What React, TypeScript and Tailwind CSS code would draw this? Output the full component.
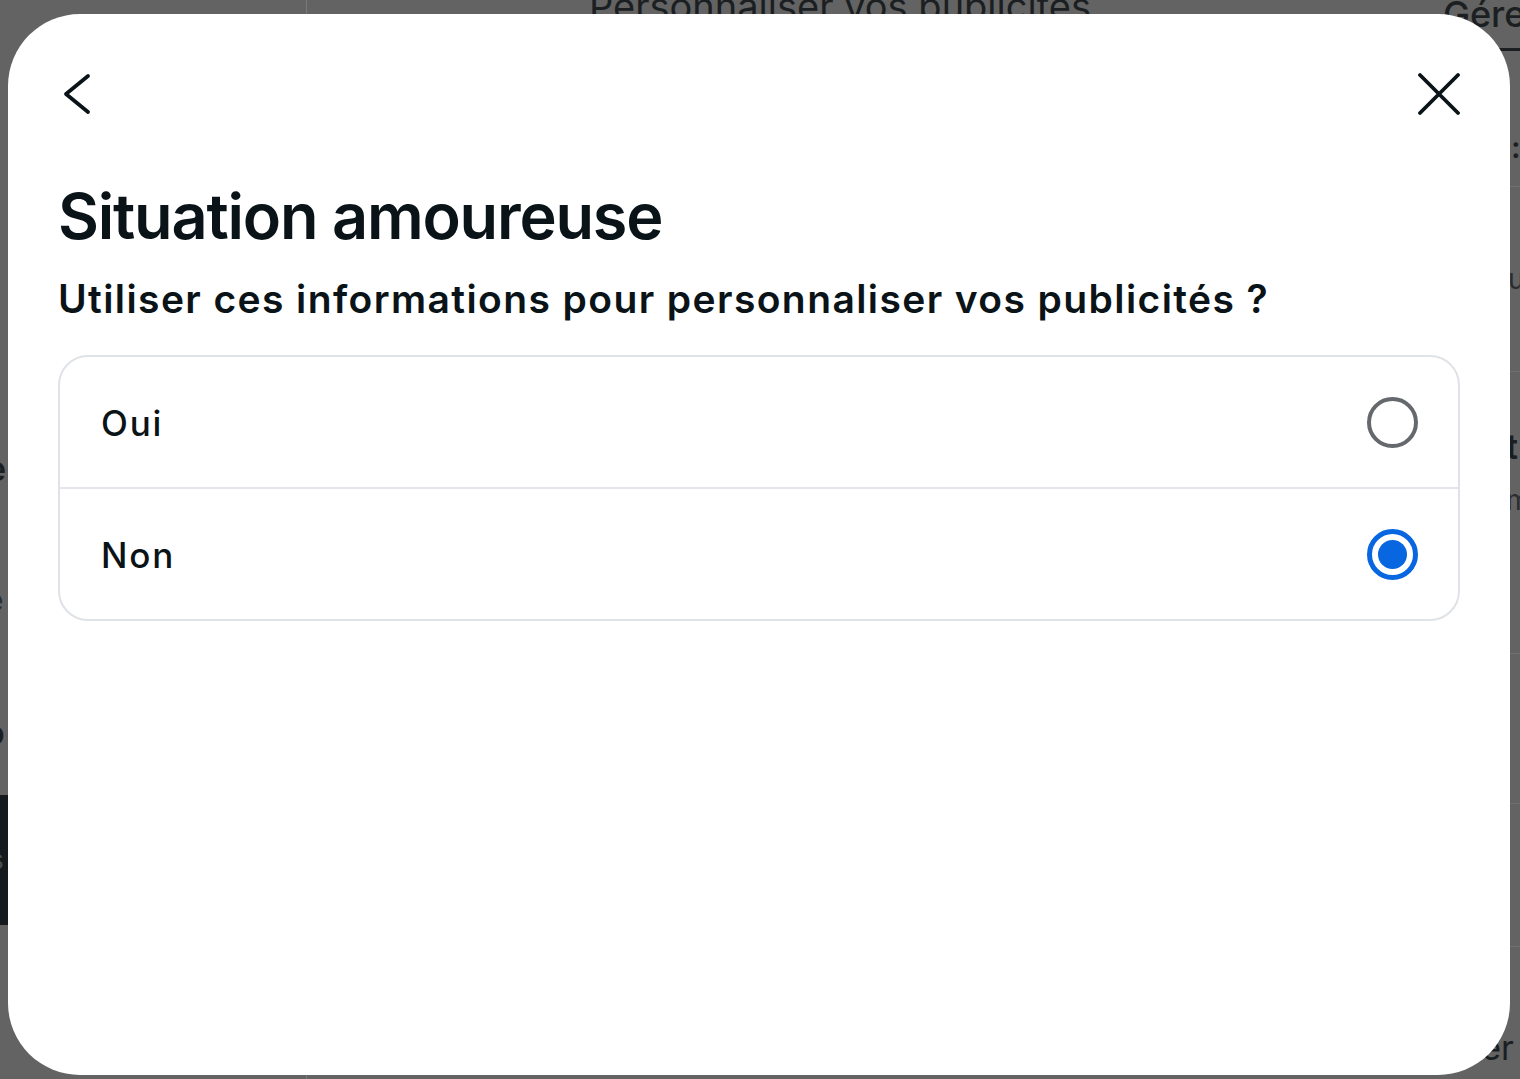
import React from "react";

function Radio({ checked }: { checked: boolean }) {
  if (checked) {
    return (
      <div className="flex h-[51px] w-[51px] items-center justify-center rounded-full border-[5px] border-[#0866e0]">
        <div className="h-[29px] w-[29px] rounded-full bg-[#0866e0]" />
      </div>
    );
  }
  return <div className="h-[51px] w-[51px] rounded-full border-[4px] border-[#65686c]" />;
}

function Option({ label, checked }: { label: string; checked: boolean }) {
  return (
    <label className="flex h-[130px] cursor-pointer items-center justify-between pl-[41px] pr-[40px]">
      <span className="mt-[3px] text-[35px] font-medium leading-none tracking-[1.8px] text-[#0a1317]">{label}</span>
      <Radio checked={checked} />
    </label>
  );
}

function Backdrop() {
  return (
    <div className="flex h-full w-full text-[#1b1f22]">
      {/* left edge of the page behind */}
      <div className="flex w-[8px] flex-col">
        <div className="h-[452px]" />
        <span className="-ml-[14px] h-[133px] text-[34px] font-semibold leading-none">e</span>
        <span className="-ml-[14px] h-[131px] text-[30px] leading-none text-[#2a2d30]">e</span>
        <span className="-ml-[16px] h-[79px] text-[34px] font-semibold leading-none">o</span>
        <div className="flex h-[130px] items-center bg-[#141a1d]">
          <span className="-ml-[10px] text-[26px] leading-none text-[#4a4f53]">s</span>
        </div>
      </div>

      {/* sidebar + main column */}
      <div className="w-[299px] border-r border-[#7a7a7a]" />
      <div className="flex flex-1 flex-col pl-[282px]">
        <span className="-mt-[13px] whitespace-nowrap text-[38px] leading-none">Personnaliser vos publicités</span>
      </div>

      {/* right column of the page behind */}
      <div className="flex w-[80px] flex-col">
        <span className="-mt-[4px] h-[52px] pl-[3px] text-[36px] font-medium leading-none">Gére</span>
        <div className="ml-[58px] h-[3px] bg-[#1b1f22]" />
        <div className="flex h-[136px] flex-col justify-end border-b border-[#707070] pb-[24px] pl-[71px]">
          <span className="text-[30px] font-semibold leading-none">:</span>
        </div>
        <div className="flex h-[185px] flex-col justify-center border-b border-[#707070] pl-[68px]">
          <span className="text-[28px] leading-none text-[#2a2d30]">u</span>
        </div>
        <div className="flex h-[282px] flex-col justify-start gap-[22px] border-b border-[#707070] pt-[58px] pl-[66px]">
          <span className="text-[34px] font-semibold leading-none">t</span>
          <span className="text-[28px] leading-none text-[#2a2d30]">m</span>
        </div>
        <div className="h-[150px] border-b border-[#707070]" />
        <div className="h-[143px] border-b border-[#707070]" />
        <span className="mt-[84px] pl-[33px] text-[34px] leading-none">ier</span>
      </div>
    </div>
  );
}

export default function App() {
  return (
    <div
      className="relative h-[1079px] w-[1520px] overflow-hidden bg-[#636363]"
      style={{ fontFamily: "Inter, 'Noto Sans', sans-serif" }}
    >
      <Backdrop />

      {/* dialog */}
      <div
        role="dialog"
        className="absolute left-[8px] top-[14px] flex h-[1061px] w-[1502px] flex-col rounded-[72px] bg-white px-[50px] pt-[56px]"
      >
        <div className="flex h-[48px] items-center justify-between">
          <button className="flex h-[48px] w-[48px] items-center justify-start">
            <svg width="40" height="44" viewBox="0 0 40 44" fill="none">
              <path d="M30 4 L8 22 L30 40" stroke="#0a1317" strokeWidth="3.8" strokeLinecap="round" strokeLinejoin="round" />
            </svg>
          </button>
          <button className="flex h-[48px] w-[48px] items-center justify-end">
            <svg width="44" height="44" viewBox="0 0 44 44" fill="none">
              <path d="M4 3 L42 41 M42 3 L4 41" stroke="#0a1317" strokeWidth="3.8" strokeLinecap="round" />
            </svg>
          </button>
        </div>

        <h1 className="mt-[67px] text-[63px] font-semibold leading-none tracking-[-1.2px] text-[#0a1317]">
          Situation amoureuse
        </h1>
        <p className="mt-[31px] whitespace-nowrap text-[39px] font-semibold leading-none tracking-[1.4px] text-[#0a1317]">
          Utiliser ces informations pour personnaliser vos publicités ?
        </p>

        <div className="mt-[37px] flex flex-col overflow-hidden rounded-[30px] border-2 border-[#dfe2e7]">
          <Option label="Oui" checked={false} />
          <div className="h-[2px] bg-[#e3e6ea]" />
          <Option label="Non" checked={true} />
        </div>
      </div>
    </div>
  );
}
